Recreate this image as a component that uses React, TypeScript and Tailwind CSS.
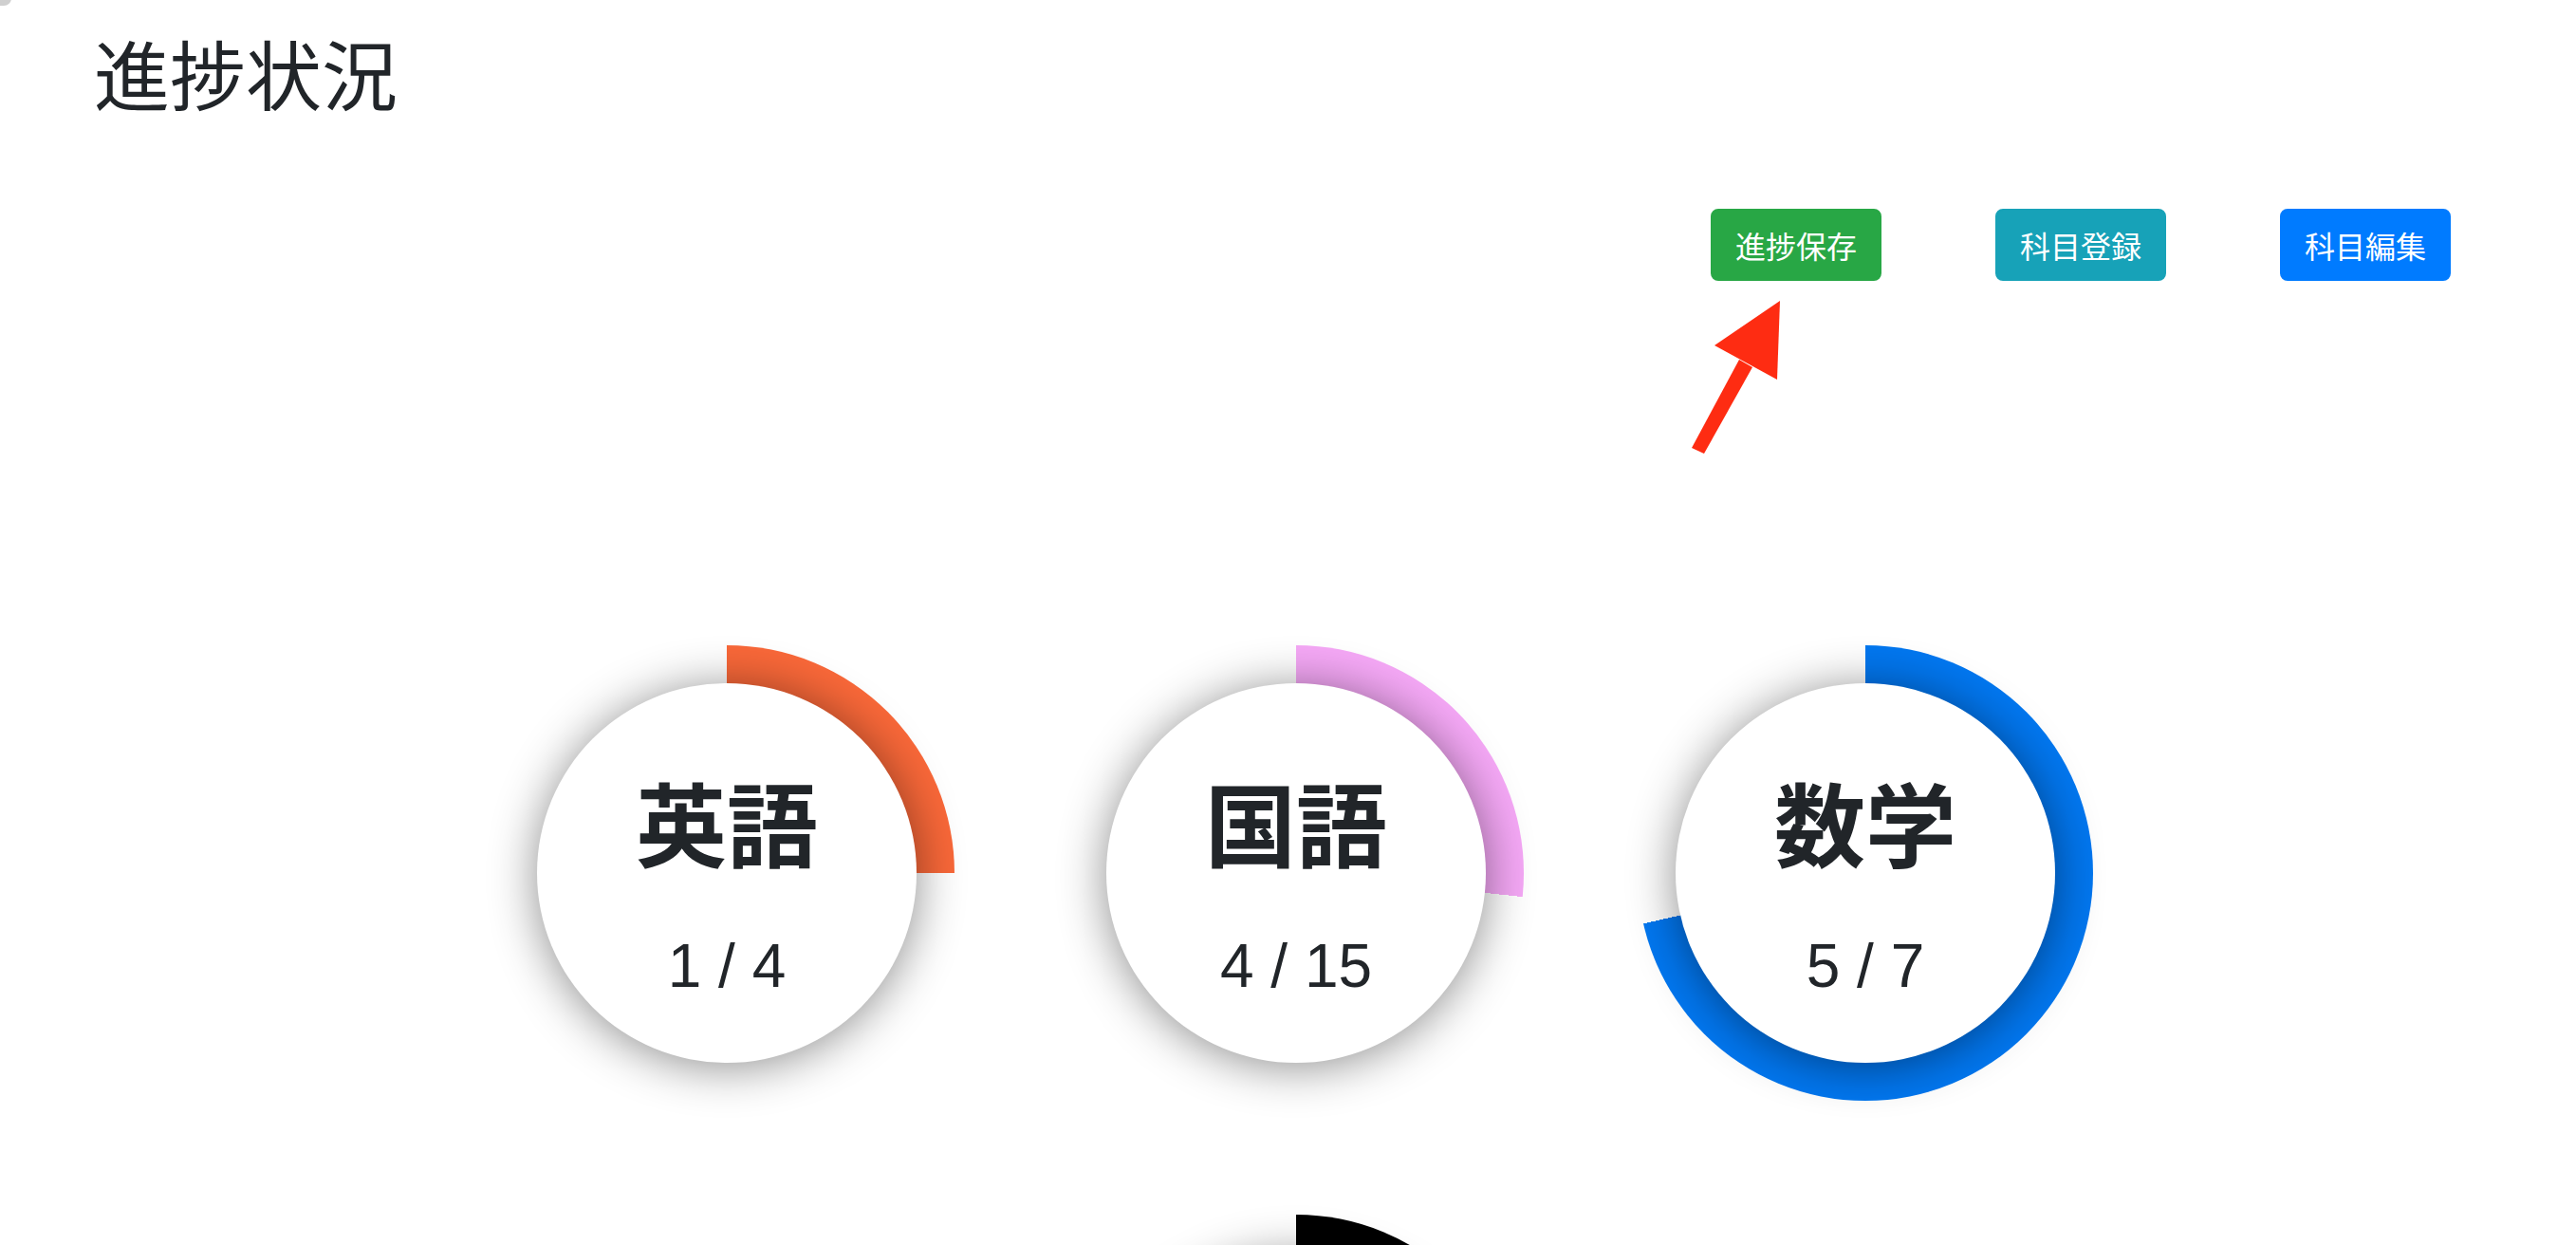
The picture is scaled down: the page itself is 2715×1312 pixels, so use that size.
import React from 'react';

type Subject = { name: string; done: number; total: number; color: string };

const subjects: Subject[] = [
  { name: '英語', done: 1, total: 4, color: '#f96839' },
  { name: '国語', done: 4, total: 15, color: '#f5a8f6' },
  { name: '数学', done: 5, total: 7, color: '#0277f0' },
  { name: '社会', done: 2, total: 9, color: '#000000' },
];

const jp = { fontFamily: '"Noto Sans CJK JP", "Noto Sans", sans-serif' };

function ProgressCircle({ s }: { s: Subject }) {
  const pct = (s.done / s.total) * 100;
  return (
    <div className="w-[600px] h-[600px] flex items-center justify-center">
      <div
        className="w-[480px] h-[480px] rounded-full flex items-center justify-center"
        style={{ background: `conic-gradient(${s.color} 0% ${pct}%, transparent ${pct}% 100%)` }}
      >
        <div className="w-[400px] h-[400px] rounded-full bg-white shadow-[0_4px_50px_rgba(0,0,0,0.45)] flex flex-col items-center pt-[97px] text-[#212529]">
          <div className="text-[96px] font-bold leading-none" style={jp}>
            {s.name}
          </div>
          <div className="mt-[73px] text-[64px] leading-none font-['Liberation_Sans',sans-serif]">
            {s.done} / {s.total}
          </div>
        </div>
      </div>
    </div>
  );
}

export default function App() {
  return (
    <div className="relative w-full h-[1312px] overflow-hidden bg-white" style={jp}>
      {/* 左上のかけら */}
      <div className="absolute -left-[10px] -top-[10px] w-[22px] h-[16px] rounded-full bg-[#cfcfcf]" />

      <h1 className="pt-[27px] pl-[99px] text-[80px] leading-[1.2] font-normal text-[#212529]">進捗状況</h1>

      <div className="mt-[97px] flex justify-end gap-[120px] pr-[132px]">
        <button className="w-[180px] h-[76px] rounded-[8px] bg-[#28a745] border-2 border-[#28a745] text-white text-[32px] leading-[48px]">
          進捗保存
        </button>
        <button className="w-[180px] h-[76px] rounded-[8px] bg-[#17a2b8] border-2 border-[#17a2b8] text-white text-[32px] leading-[48px]">
          科目登録
        </button>
        <button className="w-[180px] h-[76px] rounded-[8px] bg-[#007bff] border-2 border-[#007bff] text-white text-[32px] leading-[48px]">
          科目編集
        </button>
      </div>

      <div className="pl-[17px] mt-[324px]">
        <div className="mx-auto w-[1800px] flex flex-wrap justify-center">
          {subjects.map((s) => (
            <ProgressCircle key={s.name} s={s} />
          ))}
        </div>
      </div>

      {/* 注釈の矢印 */}
      <svg className="absolute left-[1770px] top-[310px] pointer-events-none" width="120" height="180" viewBox="0 0 120 180">
        <polygon points="106,7 37,54 103,90" fill="#fe2c12" />
        <polygon points="63,69 77,77 26,168 13,162" fill="#fe2c12" />
      </svg>
    </div>
  );
}
